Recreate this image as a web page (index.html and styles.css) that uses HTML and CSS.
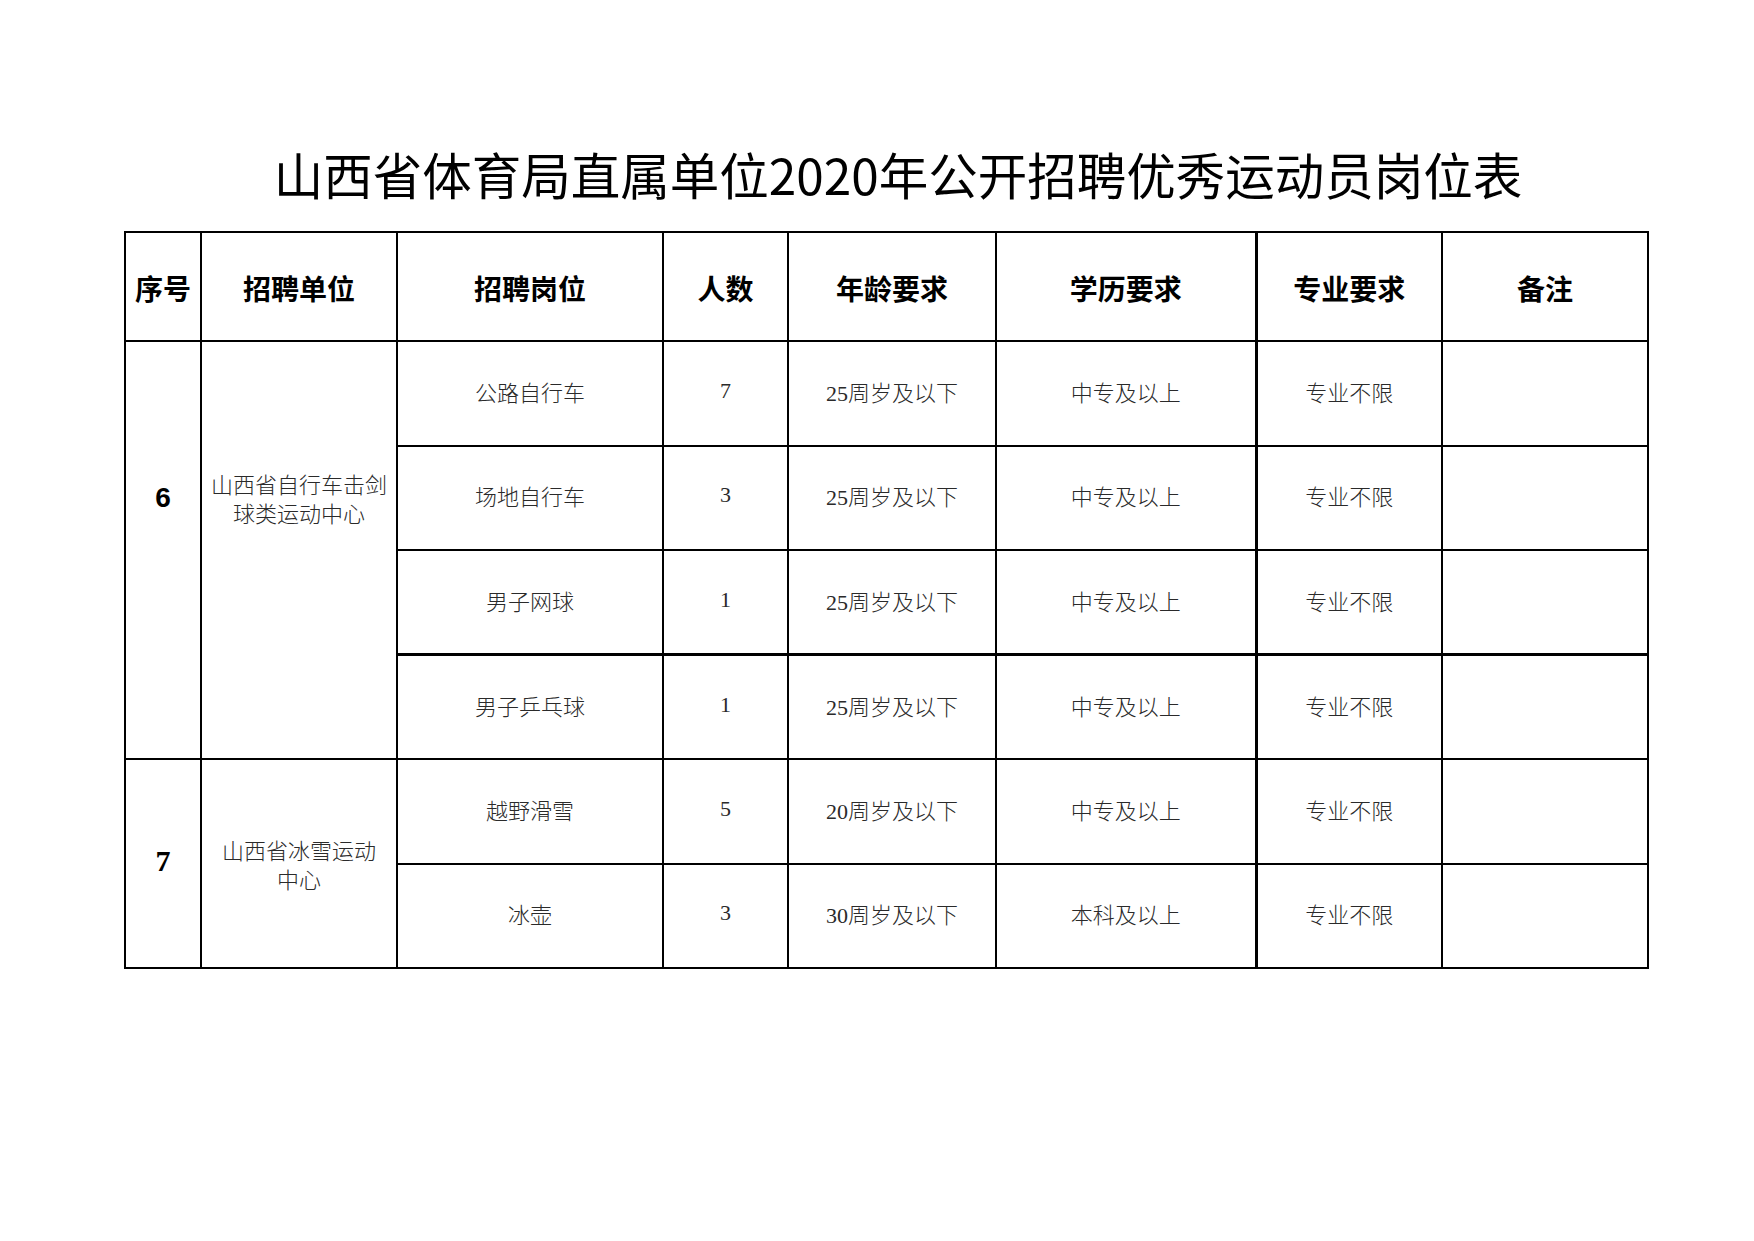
FILE: index.html
```html
<!DOCTYPE html>
<html lang="zh-CN">
<head>
<meta charset="utf-8">
<title>山西省体育局直属单位2020年公开招聘优秀运动员岗位表</title>
<link rel="stylesheet" href="styles.css">
</head>
<body>
<div class="page">
  <h1 class="title">山西省体育局直属单位2020年公开招聘优秀运动员岗位表</h1>
  <table class="sheet">
    <colgroup>
      <col class="c-no">
      <col class="c-unit">
      <col class="c-post">
      <col class="c-num">
      <col class="c-age">
      <col class="c-edu">
      <col class="c-major">
      <col class="c-note">
    </colgroup>
    <thead>
      <tr class="head-row">
        <th>序号</th>
        <th>招聘单位</th>
        <th>招聘岗位</th>
        <th>人数</th>
        <th>年龄要求</th>
        <th>学历要求</th>
        <th class="major">专业要求</th>
        <th>备注</th>
      </tr>
    </thead>
    <tbody>
      <tr class="row">
        <td rowspan="4" class="no no-sans offset">6</td>
        <td rowspan="4" class="unit offset"><span class="line">山西省自行车击剑</span><span class="line">球类运动中心</span></td>
        <td>公路自行车</td>
        <td>7</td>
        <td>25周岁及以下</td>
        <td>中专及以上</td>
        <td class="major">专业不限</td>
        <td></td>
      </tr>
      <tr class="row">
        <td>场地自行车</td>
        <td>3</td>
        <td>25周岁及以下</td>
        <td>中专及以上</td>
        <td class="major">专业不限</td>
        <td></td>
      </tr>
      <tr class="row">
        <td>男子网球</td>
        <td>1</td>
        <td>25周岁及以下</td>
        <td>中专及以上</td>
        <td class="major">专业不限</td>
        <td></td>
      </tr>
      <tr class="row thick-top">
        <td>男子乒乓球</td>
        <td>1</td>
        <td>25周岁及以下</td>
        <td>中专及以上</td>
        <td class="major">专业不限</td>
        <td></td>
      </tr>
      <tr class="row">
        <td rowspan="2" class="no no-serif">7</td>
        <td rowspan="2" class="unit"><span class="line">山西省冰雪运动</span><span class="line">中心</span></td>
        <td>越野滑雪</td>
        <td>5</td>
        <td>20周岁及以下</td>
        <td>中专及以上</td>
        <td class="major">专业不限</td>
        <td></td>
      </tr>
      <tr class="row">
        <td>冰壶</td>
        <td>3</td>
        <td>30周岁及以下</td>
        <td>本科及以上</td>
        <td class="major">专业不限</td>
        <td></td>
      </tr>
    </tbody>
  </table>
</div>
</body>
</html>
```
FILE: styles.css
```css
html, body {
  margin: 0;
  padding: 0;
  background: #ffffff;
}

.page {
  padding: 150px 0 0 124px;
}

.title {
  margin: 0 0 33px 0;
  width: 1523px;
  padding-left: 25px;
  box-sizing: border-box;
  text-align: center;
  font-family: "Noto Sans CJK SC", "Noto Sans", sans-serif;
  font-weight: 400;
  font-size: 49.5px;
  line-height: 48px;
  color: #000;
  white-space: nowrap;
}

.sheet {
  border-collapse: collapse;
  table-layout: fixed;
  width: 1523px;
  font-family: "Liberation Serif", "Noto Sans CJK SC", serif;
  color: #2a2a2a;
}

.c-no { width: 76px; }
.c-unit { width: 196px; }
.c-post { width: 266px; }
.c-num { width: 125px; }
.c-age { width: 208px; }
.c-edu { width: 260px; }
.c-major { width: 186px; }
.c-note { width: 206px; }

.sheet th,
.sheet td {
  border: 2px solid #000;
  text-align: center;
  vertical-align: middle;
  padding: 0;
}

.head-row {
  height: 109px;
}

.sheet th {
  font-family: "Noto Sans CJK SC", sans-serif;
  font-weight: 700;
  font-size: 28px;
  color: #000;
  padding-top: 2px;
}

.row {
  height: 104.5px;
}

.sheet td {
  font-size: 22px;
  font-weight: 300;
  padding-bottom: 5px;
}

.sheet .major {
  border-left-width: 3px;
}

.thick-top td {
  border-top-width: 3px;
}

.sheet .unit {
  font-family: "Noto Sans CJK SC", sans-serif;
  font-size: 22px;
  line-height: 29px;
  padding: 0 3px;
}

.unit .line {
  display: block;
  white-space: nowrap;
}

.sheet .offset {
  padding-bottom: 104px;
}

.sheet .no {
  color: #000;
  font-weight: 700;
}

.sheet .no-sans {
  font-family: "Liberation Sans", sans-serif;
  font-size: 28px;
}

.sheet .no-serif {
  font-family: "Liberation Serif", serif;
  font-size: 30px;
}
```
